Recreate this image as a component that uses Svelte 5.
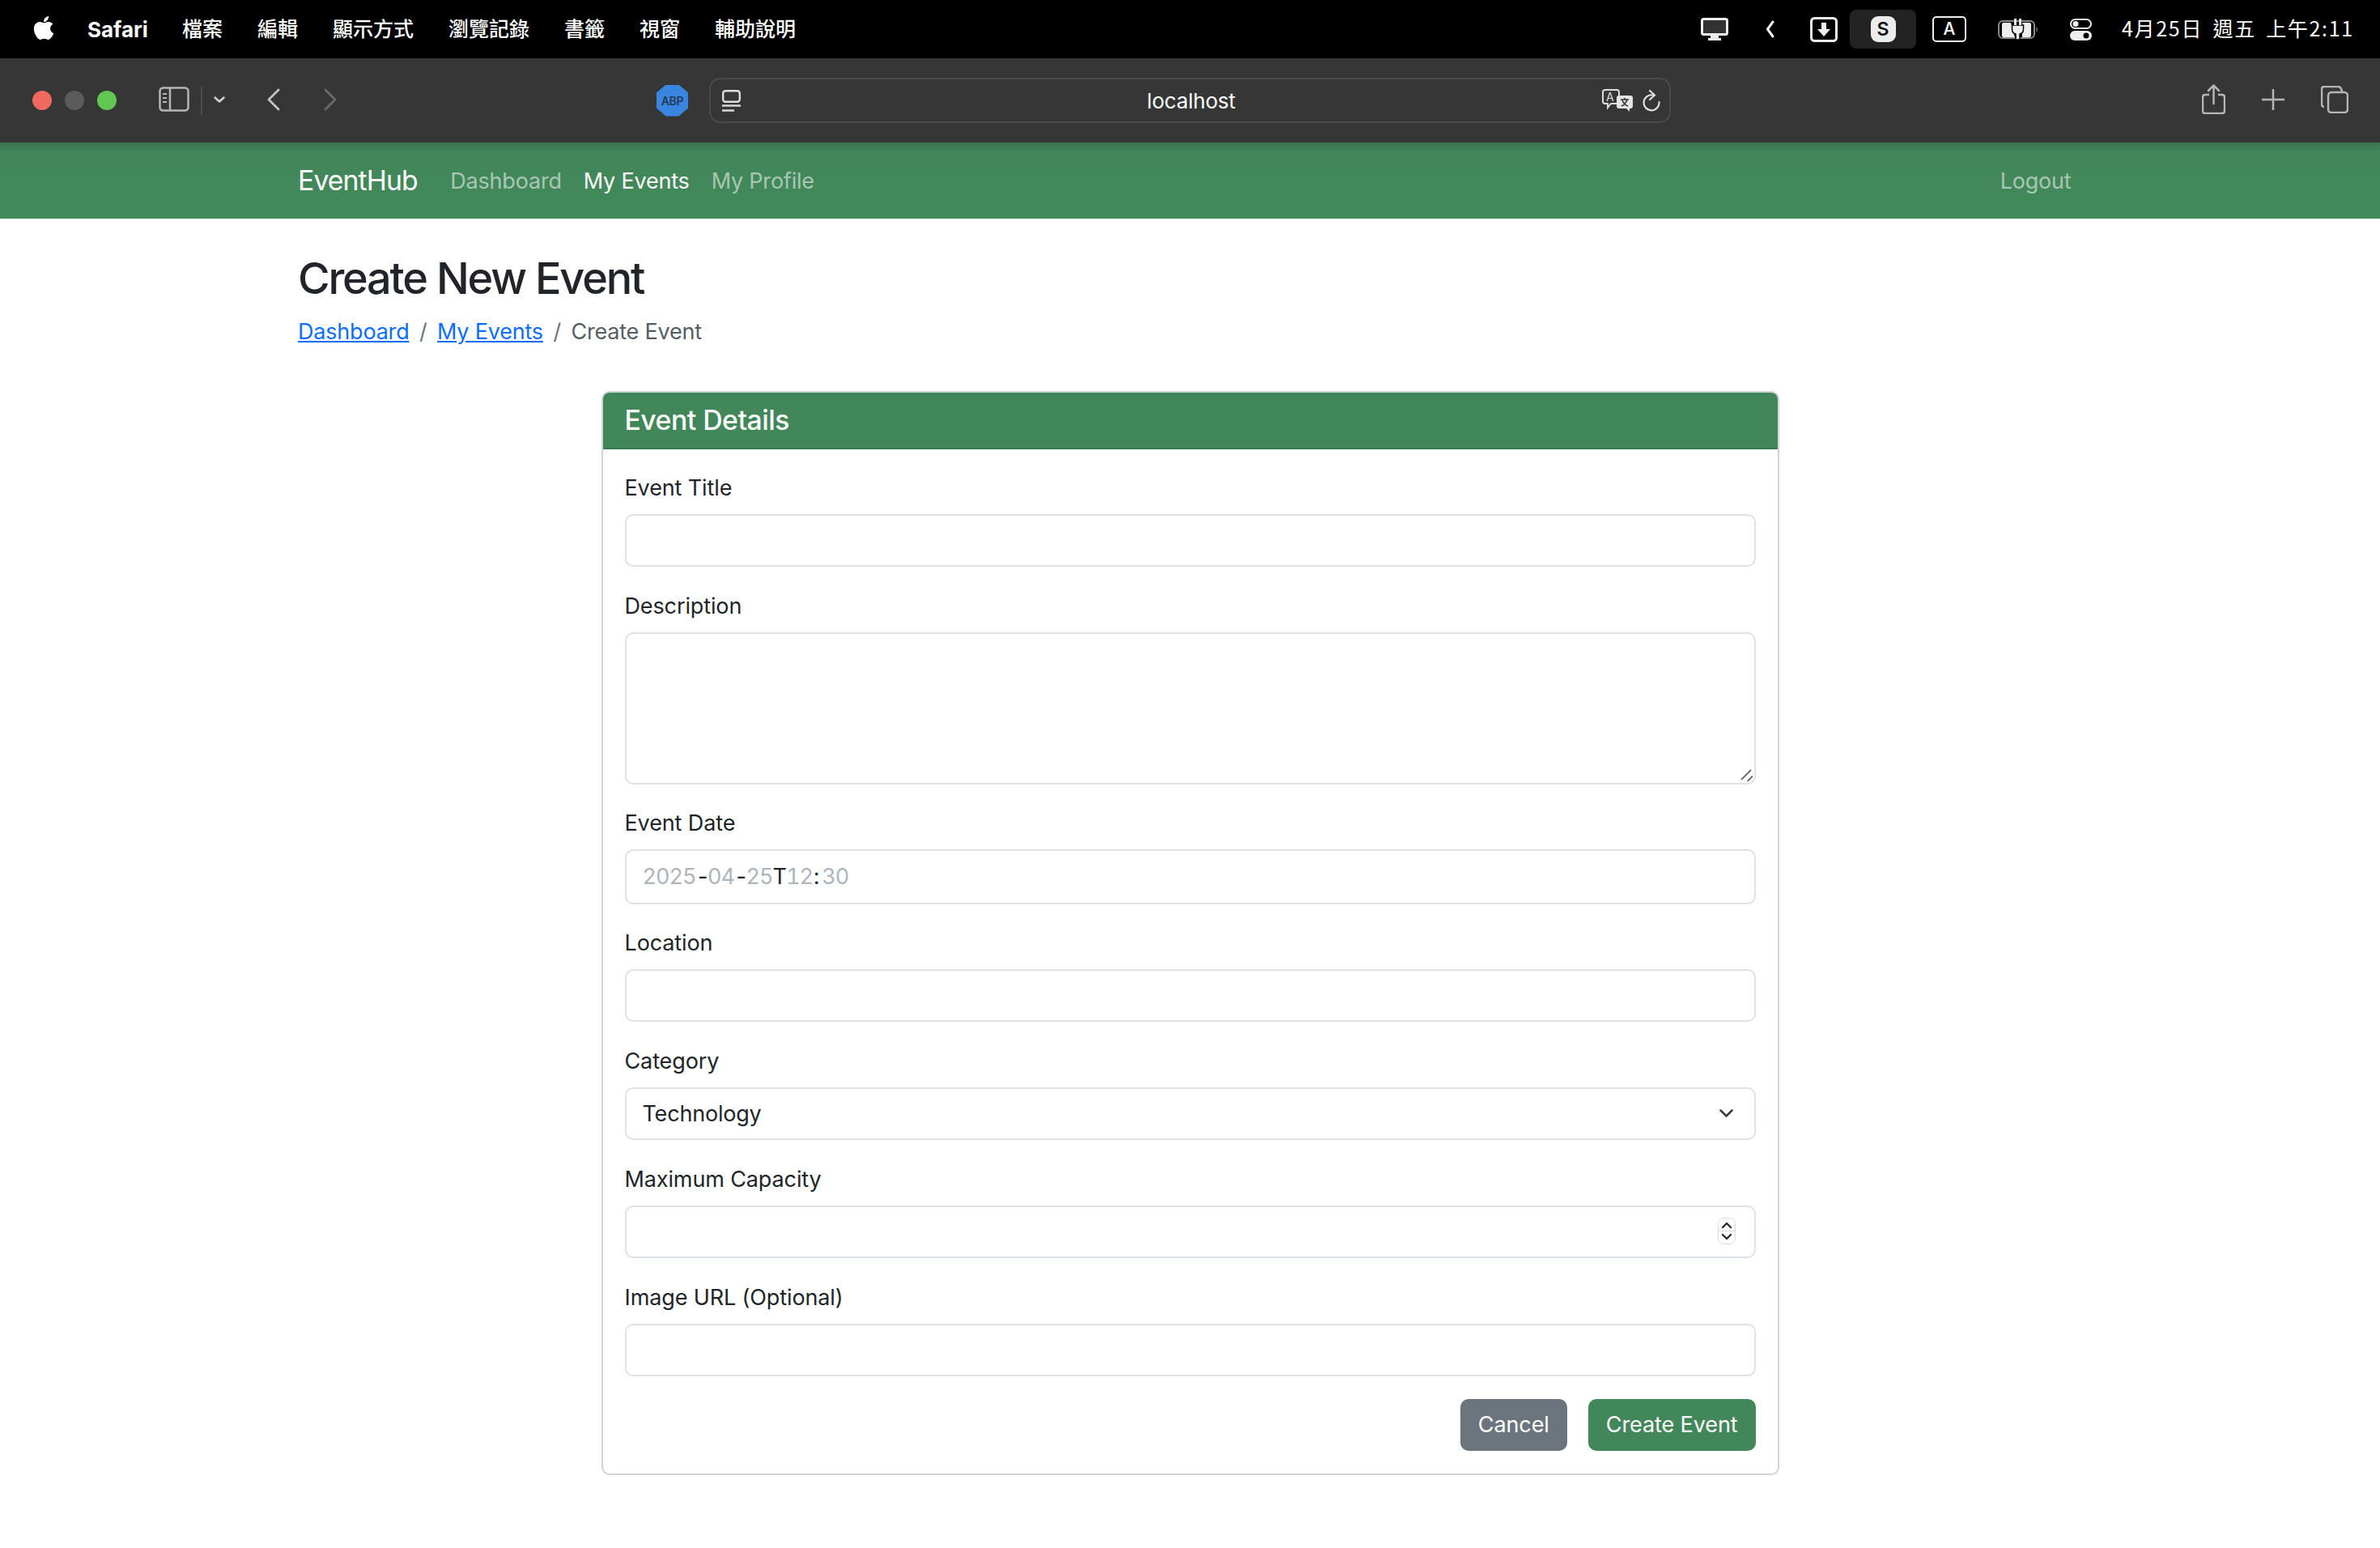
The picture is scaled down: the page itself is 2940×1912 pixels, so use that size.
<script>
  const menus = ['檔案', '編輯', '顯示方式', '瀏覽記錄', '書籤', '視窗', '輔助說明'];
  const applePath = 'M318.7 268.7c-.2-36.7 16.4-64.4 50-84.8-18.8-26.9-47.2-41.7-84.7-44.6-35.5-2.8-74.3 20.7-88.5 20.7-15 0-49.4-19.7-76.4-19.7C63.3 141.2 4 184.8 4 273.5q0 39.3 14.4 81.2c12.8 36.7 59 126.7 107.2 125.2 25.2-.6 43-17.9 75.8-17.9 31.8 0 48.3 17.9 76.4 17.9 48.6-.7 90.4-82.5 102.6-119.3-65.2-30.7-61.7-90-61.7-91.9zm-56.6-164.2c27.3-32.4 24.8-61.9 24-72.5-24.1 1.4-52 16.4-67.9 34.9-17.5 19.8-27.8 44.3-25.6 71.9 26.1 2 49.9-11.4 69.5-34.3z';
</script>

<div class="screen">
  <header class="menubar">
    <svg class="apple" viewBox="0 0 384 512" width="26" height="33"><path fill="#fff" d={applePath} /></svg>
    <span class="appname">Safari</span>
    <nav class="menus">
      {#each menus as m}<span>{m}</span>{/each}
    </nav>
    <div class="status">
      <svg class="st-monitor" width="34" height="28" viewBox="0 0 34 28"><rect x="1.5" y="1.5" width="31" height="19" rx="2" fill="#333" stroke="#eee" stroke-width="3"/><path d="M12 22h10v3h3v3H9v-3h3z" fill="#eee"/></svg>
      <svg class="st-chev" width="11" height="22" viewBox="0 0 11 22"><path d="M9 2 2.5 11 9 20" fill="none" stroke="#eee" stroke-width="3" stroke-linecap="round" stroke-linejoin="round"/></svg>
      <svg class="st-down" width="34" height="31" viewBox="0 0 34 31"><rect x="1.5" y="1.5" width="31" height="28" rx="4" fill="none" stroke="#eee" stroke-width="3"/><path d="M14 7h6v8h5l-8 9-8-9h5z" fill="#eee"/></svg>
      <div class="st-s"><span>S</span></div>
      <div class="st-a">A</div>
      <svg class="st-batt" width="51" height="26" viewBox="0 0 51 26"><rect x="1" y="3" width="44" height="21" rx="5" fill="none" stroke="#8a8a8a" stroke-width="2"/><path d="M5 7q0-2 2-2h9l5 18H7q-2 0-2-2zM30 5h9q2 0 2 2v14q0 2-2 2h-9z" fill="#eee"/><path d="M17.500 8h14v5q0 5-4.500 6v7h-5v-7q-4.500-1-4.500-6z" fill="#eee" stroke="#000" stroke-width="1.500"/><path d="M20 0h3v8h-3zM26 0h3v8h-3z" fill="#eee"/><path d="M47.500 10q3 3.500 0 7z" fill="#8a8a8a"/></svg>
      <svg class="st-switch" width="27" height="27" viewBox="0 0 27 27"><rect x="1" y="1" width="25" height="11" rx="5.5" fill="none" stroke="#eee" stroke-width="2"/><circle cx="7" cy="6.500" r="3.500" fill="#eee"/><rect y="15" width="27" height="12" rx="6" fill="#eee"/><circle cx="20" cy="21" r="3.500" fill="#000"/></svg>
      <span class="clock">4月25日 週五 上午2:11</span>
    </div>
  </header>

  <div class="toolbar">
    <div class="lights"><i class="red"></i><i class="grey"></i><i class="green"></i></div>
    <svg class="t-side" width="38" height="31" viewBox="0 0 38 31"><rect x="1.500" y="1.500" width="35" height="28" rx="4" fill="none" stroke="#b5b5b5" stroke-width="2.500"/><path d="M14 2v27" stroke="#b5b5b5" stroke-width="2.500"/><path d="M5 9h5M5 14h5M5 19h5" stroke="#b5b5b5" stroke-width="2"/></svg>
    <span class="t-divider"></span>
    <svg class="t-drop" width="14" height="8" viewBox="0 0 14 8"><path d="M1.500 1.500 7 6.500l5.500-5" fill="none" stroke="#d0d0d0" stroke-width="2.500" stroke-linecap="round" stroke-linejoin="round"/></svg>
    <svg class="t-back" width="17" height="28" viewBox="0 0 17 28"><path d="M15 2 3 14l12 12" fill="none" stroke="#c4c4c4" stroke-width="2.800" stroke-linecap="round" stroke-linejoin="round"/></svg>
    <svg class="t-fwd" width="17" height="28" viewBox="0 0 17 28"><path d="M2 2l12 12L2 26" fill="none" stroke="#6a6a6a" stroke-width="2.800" stroke-linecap="round" stroke-linejoin="round"/></svg>
    <div class="abp"><span>ABP</span></div>
    <div class="urlbar">
      <svg class="u-site" width="23" height="27" viewBox="0 0 23 27"><rect x="1.200" y="1.200" width="20.600" height="13.600" rx="3" fill="none" stroke="#ddd" stroke-width="2.400"/><path d="M0 19.500h23" stroke="#ddd" stroke-width="2.400"/><path d="M0 25.500h15" stroke="#ddd" stroke-width="2.400"/></svg>
      <span class="u-host">localhost</span>
      <svg class="u-trans" width="39" height="28" viewBox="0 0 39 28"><path d="M4 1h14q3 0 3 3v11q0 3-3 3h-7l-4 5v-5H4q-3 0-3-3V4q0-3 3-3z" fill="none" stroke="#ddd" stroke-width="2"/><text x="5" y="15" font-size="14" fill="#ddd" font-family="Inter, sans-serif">A</text><path d="M21 8h14q3 0 3 3v10q0 3-3 3h-1v4l-4-4h-9q-3 0-3-3V11q0-3 3-3z" fill="#e4e4e4"/><path d="M23 13h10M28 11v2M31 13q-2 6-7 8M25 14q2 5 7 7" fill="none" stroke="#333" stroke-width="1.600"/></svg>
      <svg class="u-reload" width="22" height="27" viewBox="0 0 22 27"><path d="M13 6.500A9.500 9.500 0 1 0 20.500 15" fill="none" stroke="#ddd" stroke-width="2.200" stroke-linecap="round"/><path d="M9 1l6 5.500L9 12" fill="none" stroke="#ddd" stroke-width="2.200" stroke-linecap="round" stroke-linejoin="round"/></svg>
    </div>
    <svg class="t-share" width="29" height="37" viewBox="0 0 29 37"><path d="M9 13H4q-3 0-3 3v17q0 3 3 3h21q3 0 3-3V16q0-3-3-3h-5" fill="none" stroke="#b5b5b5" stroke-width="2.500"/><path d="M14.500 24V2M8 8l6.500-6.500L21 8" fill="none" stroke="#b5b5b5" stroke-width="2.500" stroke-linecap="round" stroke-linejoin="round"/></svg>
    <svg class="t-plus" width="28" height="26" viewBox="0 0 28 26"><path d="M14 0v26M0 13h28" stroke="#b5b5b5" stroke-width="2.500"/></svg>
    <svg class="t-tabs" width="34" height="34" viewBox="0 0 34 34"><path d="M4 26q-3 0-3-3V4q0-3 3-3h17q4 0 5 6" fill="none" stroke="#b5b5b5" stroke-width="2.500"/><rect x="9" y="8" width="24" height="25" rx="4" fill="none" stroke="#b5b5b5" stroke-width="2.500"/></svg>
  </div>

  <nav class="navbar">
    <a class="brand" href="#top">EventHub</a>
    <a class="nl" href="#top">Dashboard</a>
    <a class="nl active" href="#top">My Events</a>
    <a class="nl" href="#top">My Profile</a>
    <a class="nl logout" href="#top">Logout</a>
  </nav>

  <main class="page">
    <h1>Create New Event</h1>
    <div class="crumbs">
      <a href="#top">Dashboard</a><span class="sep">/</span><a href="#top">My Events</a><span class="sep">/</span><span class="cur">Create Event</span>
    </div>

    <section class="card">
      <h2 class="card-head">Event Details</h2>
      <form class="card-body">
        <label for="f-title">Event Title</label>
        <input id="f-title" class="control" type="text" />

        <label for="f-desc">Description</label>
        <div class="with-icon">
          <textarea id="f-desc" class="control area"></textarea>
          <svg class="grip" width="16" height="16" viewBox="0 0 16 16"><path d="M1 13 13 1M8.500 15 15 8.500" stroke="#6a6a6a" stroke-width="1.800" fill="none"/></svg>
        </div>

        <label for="f-date">Event Date</label>
        <div id="f-date" class="control date"><span class="g">2025</span><span class="h">-</span><span class="g">04</span><span class="h">-</span><span class="g">25</span>T<span class="g">12</span><span class="c">:</span><span class="g">30</span></div>

        <label for="f-loc">Location</label>
        <input id="f-loc" class="control" type="text" />

        <label for="f-cat">Category</label>
        <div class="with-icon">
          <select id="f-cat" class="control sel"><option>Technology</option></select>
          <svg class="chev" width="17" height="10" viewBox="0 0 17 10"><path d="M1.500 1.500 8.500 8.500l7-7" fill="none" stroke="#343a40" stroke-width="2.500" stroke-linecap="round" stroke-linejoin="round"/></svg>
        </div>

        <label for="f-cap">Maximum Capacity</label>
        <div class="with-icon">
          <input id="f-cap" class="control" type="text" />
          <svg class="spin" width="22" height="33" viewBox="0 0 22 33"><rect x=".5" y=".5" width="21" height="32" rx="7" fill="#fff" stroke="#dcdcdc"/><path d="M0 16.500h22" stroke="#dcdcdc"/><path d="M6 12l5-5 5 5M6 21l5 5 5-5" fill="none" stroke="#2a2a2a" stroke-width="2.400" stroke-linecap="round" stroke-linejoin="round"/></svg>
        </div>

        <label for="f-img">Image URL (Optional)</label>
        <input id="f-img" class="control" type="text" />

        <div class="actions">
          <button type="button" class="btn cancel">Cancel</button>
          <button type="button" class="btn create">Create Event</button>
        </div>
      </form>
    </section>
  </main>
</div>

<style>
  :global(body) { margin: 0; background: #fff; }
  .screen { width: 2940px; min-height: 1912px; font-family: Inter, "Noto Sans", sans-serif; color: #212529; font-size: 27px; line-height: 1.5; }

  .menubar { height: 72px; background: #000; color: #fff; display: flex; align-items: center; padding-left: 41px; box-sizing: border-box; font-size: 25px; font-family: Inter, "Noto Sans CJK TC", sans-serif; }
  .apple { margin-right: 41px; margin-top: -3px; }
  .appname { font-weight: 700; font-size: 26px; width: 76px; margin-right: 42px; }
  .menus { display: flex; gap: 43px; font-family: "Noto Sans CJK TC", sans-serif; font-weight: 500; margin-left: -1px; margin-top: -2px; }
  .status { margin-left: auto; display: flex; align-items: center; height: 100%; }
  .st-monitor { margin-right: 46px; }
  .st-chev { margin-right: 44px; }
  .st-down { margin-right: 15px; }
  .st-s { width: 82px; height: 48px; background: #232323; border-radius: 8px; display: flex; align-items: center; justify-content: center; }
  .st-s span { width: 31px; height: 32px; border-radius: 9px; background: #ececec; color: #111; font-size: 23px; font-weight: 600; display: flex; align-items: center; justify-content: center; }
  .st-a { width: 42px; height: 32px; box-sizing: border-box; border: 2px solid #eee; border-radius: 5px; margin-left: 20px; margin-right: 39px; display: flex; align-items: center; justify-content: center; font-size: 21px; font-weight: 500; }
  .st-batt { margin-right: 38px; }
  .st-switch { margin-right: 37px; }
  .clock { font-family: "Noto Sans CJK TC", sans-serif; font-size: 25px; font-weight: 400; width: 284px; margin-right: 35px; white-space: nowrap; word-spacing: 5px; letter-spacing: 1.700px; margin-top: -2px; }

  .toolbar { height: 104px; background: #363636; display: flex; align-items: center; box-sizing: border-box; padding-left: 40px; }
  .toolbar > svg { margin-bottom: 3px; }
  .lights { display: flex; gap: 16px; margin-right: 52px; }
  .lights i { width: 24px; height: 24px; border-radius: 50%; display: block; }
  .red { background: #f0695e; }
  .grey { background: #5b5b5b; }
  .green { background: #62c554; }
  .t-divider { width: 2px; height: 36px; background: #4c4c4c; margin: 0 14px; }
  .t-back { margin-left: 51px; }
  .t-fwd { margin-left: 54px; }
  .abp { margin-left: 394px; width: 39px; height: 39px; background: #3a85e0; clip-path: polygon(30% 0, 70% 0, 100% 25%, 100% 75%, 70% 100%, 30% 100%, 0 75%, 0 25%); display: flex; align-items: center; justify-content: center; }
  .abp span { font-size: 14px; font-weight: 600; color: #233a55; letter-spacing: -.3px; }
  .urlbar { margin-left: 26px; width: 1188px; height: 56px; box-sizing: border-box; border: 2px solid #4a4a4a; border-radius: 14px; display: flex; align-items: center; padding: 0 11px 0 14px; color: #fff; }
  .u-host { flex: 1; text-align: center; font-size: 26px; font-weight: 400; margin-left: 49px; letter-spacing: -.2px; }
  .u-reload { margin-left: 11px; }
  .t-share { margin-left: 656px; }
  .t-plus { margin-left: 45px; }
  .t-tabs { margin-left: 45px; }

  .navbar { height: 94px; background: linear-gradient(#3c7450, #428659 12px, #428a5a); display: flex; align-items: center; padding: 2px 368px 0; box-sizing: border-box; }
  .navbar a { text-decoration: none; letter-spacing: -.2px; }
  .navbar .brand { color: #fff; font-size: 33.75px; margin-right: 27px; letter-spacing: -.9px; margin-top: -1px; }
  .nl { color: rgba(255,255,255,.55); padding: 0 13.5px; }
  .nl.active { color: #fff; }
  .logout { margin-left: auto; }

  .page { padding: 0 368px; }
  h1 { font-size: 54px; font-weight: 500; line-height: 1.2; margin: 0; padding-top: 42px; letter-spacing: -2.200px; }
  .crumbs { margin-top: 13px; color: #212529; letter-spacing: -.2px; }
  .crumbs a { color: #0d6efd; text-decoration: underline; }
  .sep { color: #6c757d; padding: 0 12.5px; }
  .cur { color: #565e64; }

  .card { width: 1455px; margin: 53px auto 0; box-sizing: border-box; border: 2px solid #d2d3d4; border-radius: 10px; overflow: hidden; }
  .card-head { margin: 0; background: #41875a; color: #fff; font-size: 33.75px; font-weight: 500; line-height: 40px; padding: 14px 27px 14px; border-bottom: 2px solid #3a7a50; letter-spacing: -.5px; }
  .card-body { padding: 27px 27px 28px; }
  label { display: block; margin-bottom: 11.5px; line-height: 41.5px; letter-spacing: -.12px; }
  .control { display: block; width: 100%; box-sizing: border-box; height: 65px; margin-bottom: 28px; border: 2px solid #dee2e6; border-radius: 10px; background: #fff; padding: 0 20px; font: inherit; color: #212529; outline: none; letter-spacing: -.2px; }
  .area { height: 188px; resize: none; margin-bottom: 27px; }
  .date { height: 68px; line-height: 64px; font-variant-numeric: tabular-nums; letter-spacing: -1px; margin-bottom: 27px; }
  .g { color: #adb5bd; }
  .h { letter-spacing: -3px; }
  .c { letter-spacing: 3px; padding-left: 1px; }
  .with-icon { position: relative; }
  .sel { appearance: none; }
  .chev { position: absolute; right: 28px; top: 27px; pointer-events: none; }
  .spin { position: absolute; right: 25px; top: 15px; pointer-events: none; }
  .grip { position: absolute; right: 3px; bottom: 3px; pointer-events: none; }
  .actions { display: flex; justify-content: flex-end; gap: 26px; margin-top: 2px; }
  .btn { height: 64px; border: 0; border-radius: 10px; color: #fff; font: inherit; padding: 0 22px; letter-spacing: -.1px; }
  .cancel { background: #6c757d; }
  .create { background: #41875a; }
</style>
